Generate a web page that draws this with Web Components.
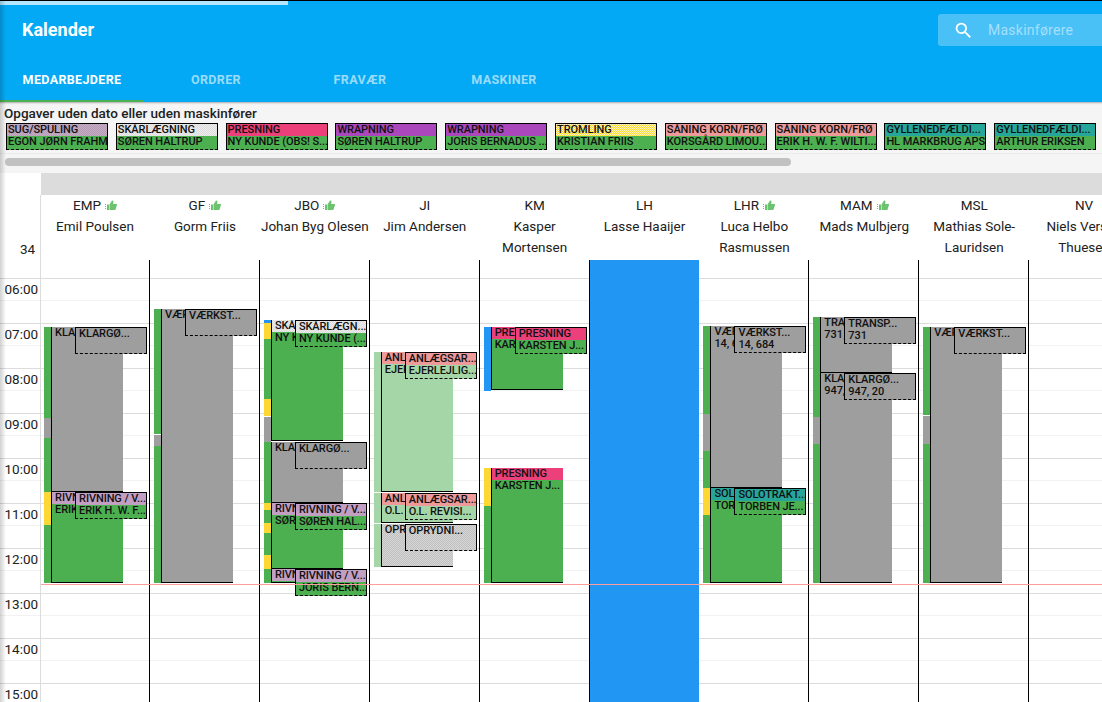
<!DOCTYPE html>
<html lang="da">
<head>
<meta charset="utf-8">
<title>Kalender</title>
<style>
html, body { margin: 0; height: 100%; overflow: hidden; background: #fff; font-family: Roboto, "Liberation Sans", sans-serif; }
</style>
</head>
<body>
<kal-app>
    <kal-header slot="header" title="Kalender" search="Maskinførere">
        <kal-tab active>MEDARBEJDERE</kal-tab>
        <kal-tab>ORDRER</kal-tab>
        <kal-tab>FRAVÆR</kal-tab>
        <kal-tab>MASKINER</kal-tab>
    </kal-header>
    <task-strip slot="strip" heading="Opgaver uden dato eller uden maskinfører">
        <task-chip kind="sug" top="SUG/SPULING" bottom="EGON JØRN FRAHM"></task-chip>
        <task-chip kind="skaer" top="SKÅRLÆGNING" bottom="SØREN HALTRUP"></task-chip>
        <task-chip kind="pres" top="PRESNING" bottom="NY KUNDE (OBS! S..."></task-chip>
        <task-chip kind="wrap" top="WRAPNING" bottom="SØREN HALTRUP"></task-chip>
        <task-chip kind="wrap" top="WRAPNING" bottom="JORIS BERNADUS ..."></task-chip>
        <task-chip kind="trom" top="TROMLING" bottom="KRISTIAN FRIIS"></task-chip>
        <task-chip kind="saa" top="SÅNING KORN/FRØ" bottom="KORSGÅRD LIMOU..."></task-chip>
        <task-chip kind="saa" top="SÅNING KORN/FRØ" bottom="ERIK H. W. F. WILTI..."></task-chip>
        <task-chip kind="gyl" top="GYLLENEDFÆLDI..." bottom="HL MARKBRUG APS"></task-chip>
        <task-chip kind="gyl" top="GYLLENEDFÆLDI..." bottom="ARTHUR ERIKSEN"></task-chip>
    </task-strip>
    <cal-board slot="board"></cal-board>
</kal-app>

<script>
// shared colours for the task kinds
const kinds = {
    sug: 'repeating-conic-gradient(#b79ab5 0 25%, #c4aec3 0 50%) 0 0/2px 2px',
    skaer: 'repeating-conic-gradient(#dcdcdc 0 25%, #ececec 0 50%) 0 0/2px 2px',
    pres: '#ec407a',
    wrap: '#ab47bc',
    trom: 'repeating-conic-gradient(#fdd835 0 25%, #fff6c4 0 50%) 0 0/2px 2px',
    saa: '#ef9a9a',
    gyl: '#26a69a',
    riv: '#c39fc3',
    sol: '#26a69a',
    green: '#4caf50',
    lgreen: '#a5d6a7',
    grey: '#9e9e9e',
    opr: 'repeating-conic-gradient(#c0c0c0 0 25%, #d6d6d6 0 50%) 0 0/2px 2px',
    yellow: '#fdd835',
    blue: '#2196f3',
    white: '#fff'
}

class KalApp extends HTMLElement {
    constructor() {
        super()
        this.attachShadow({ mode: 'open' })
        this.shadowRoot.innerHTML = `
<style>
:host { display: flex; flex-direction: column; height: 702px; width: 1102px; overflow: hidden; position: relative; font-family: Roboto, "Liberation Sans", sans-serif; }
.edge { position: absolute; left: 0; top: 1px; bottom: 0; width: 6px; pointer-events: none;
    background: linear-gradient(to right, rgba(0,0,0,.18), rgba(0,0,0,0)); }
</style>
<slot name="header"></slot>
<slot name="strip"></slot>
<slot name="board"></slot>
<div class="edge"></div>`
    }
}
customElements.define('kal-app', KalApp)

class KalTab extends HTMLElement {
    constructor() {
        super()
        this.attachShadow({ mode: 'open' })
        this.shadowRoot.innerHTML = `
<style>
:host { display: flex; align-items: center; justify-content: center; width: 144px; height: 48px; padding-top: 5px; font-size: 12.5px; font-weight: 700; letter-spacing: .35px; color: rgba(255,255,255,.6); box-sizing: border-box; border-bottom: 2px solid transparent; }
:host([active]) { color: #fff; border-bottom-color: #4caf50; }
</style>
<slot></slot>`
    }
}
customElements.define('kal-tab', KalTab)

class KalHeader extends HTMLElement {
    constructor() {
        super()
        this.attachShadow({ mode: 'open' })
        this.shadowRoot.innerHTML = `
<style>
:host { display: block; flex: none; position: relative; height: 102px; box-sizing: border-box; border-top: 1px solid #000; background: #03a9f4; color: #fff; }
.progress { position: absolute; left: 0; top: 0; width: 288px; height: 4px; background: #b3e5fc; }
.bar { display: flex; align-items: center; justify-content: space-between; height: 56px; padding-left: 22px; }
h1 { margin: 0; font-size: 18px; font-weight: 700; }
.search { display: flex; align-items: center; gap: 14px; width: 164px; height: 32px; box-sizing: border-box; padding-left: 15px; background: rgba(255,255,255,.28); border-radius: 3px 0 0 3px; margin-top: 2px; font-size: 14px; color: rgba(255,255,255,.5); letter-spacing: .25px; }
svg { width: 21px; height: 21px; flex: none; fill: #fff; }
.tabs { display: flex; height: 45px; align-items: flex-end; }
</style>
<div class="progress"></div>
<div class="bar">
    <h1></h1>
    <div class="search">
        <svg viewBox="0 0 24 24"><path d="M15.5 14h-.79l-.28-.27A6.47 6.47 0 0 0 16 9.5 6.5 6.5 0 1 0 9.5 16c1.61 0 3.09-.59 4.23-1.57l.27.28v.79l5 4.99L20.49 19l-4.99-5zm-6 0C7.01 14 5 11.99 5 9.5S7.01 5 9.5 5 14 7.01 14 9.5 11.99 14 9.5 14z"/></svg>
        <span class="ph"></span>
    </div>
</div>
<div class="tabs"><slot></slot></div>`
        this.shadowRoot.querySelector('h1').textContent = this.getAttribute('title')
        this.shadowRoot.querySelector('.ph').textContent = this.getAttribute('search')
    }
}
customElements.define('kal-header', KalHeader)

class TaskStrip extends HTMLElement {
    constructor() {
        super()
        this.attachShadow({ mode: 'open' })
        this.shadowRoot.innerHTML = `
<style>
:host { display: block; flex: none; height: 71px; box-sizing: border-box; padding-top: 3px; background: #f5f5f5; box-shadow: inset 0 3px 2px -2px rgba(0,0,0,.3); overflow: hidden; position: relative; }
.title { font-size: 13.5px; font-weight: 500; line-height: 16px; height: 18px; padding-left: 4px; color: #212121; white-space: nowrap; }
.list { display: flex; gap: 7.8px; padding-left: 6px; height: 30px; border-bottom: 1px solid #ebebeb; }
.track { height: 8px; margin-top: 4px; margin-left: 5px; width: 786px; background: #c1c1c1; border-radius: 4px; }
</style>
<div class="title"></div>
<div class="list"><slot></slot></div>
<div class="track"></div>`
        this.shadowRoot.querySelector('.title').textContent = this.getAttribute('heading')
    }
}
customElements.define('task-strip', TaskStrip)

class TaskChip extends HTMLElement {
    constructor() {
        super()
        this.attachShadow({ mode: 'open' })
        this.shadowRoot.innerHTML = `
<style>
:host { display: block; flex: none; width: 102px; height: 27px; box-sizing: border-box; border: 1px solid #000; border-bottom-style: dashed; background: #4caf50; font-size: 11px; font-weight: 500; letter-spacing: -.06px; line-height: 12px; color: #111; overflow: hidden; white-space: nowrap; }
div { padding-left: 1px; }
.top { background: var(--top, #4caf50); height: 12px; }
.bottom { height: 13px; }
</style>
<div class="top"></div>
<div class="bottom"></div>`
        this.shadowRoot.querySelector('.top').textContent = this.getAttribute('top')
        this.shadowRoot.querySelector('.bottom').textContent = this.getAttribute('bottom')
        this.style.setProperty('--top', kinds[this.getAttribute('kind')])
    }
}
customElements.define('task-chip', TaskChip)

// a task inside a column: position on the time grid is the content here
class CalEvent extends HTMLElement {
    constructor() {
        super()
        this.attachShadow({ mode: 'open' })
        this.shadowRoot.innerHTML = `
<style>
:host { position: absolute; display: block; box-sizing: border-box; font-size: 11px; font-weight: 500; letter-spacing: -.1px; line-height: 12px; color: #111; overflow: hidden; white-space: nowrap; background: var(--bg); }
:host([variant="block"]) { left: 11px; width: 72px; border-left: 1px solid #000; border-bottom: 1px solid #000; }
:host([variant="over"]) { left: 35px; width: 72px; z-index: 2; border: 1px solid #000; border-bottom-style: dashed; }
.top { background: var(--head); height: 12px; padding-left: 3px; }
.bottom { height: 13px; padding-left: 3px; }
</style>
<div class="top"></div>
<div class="bottom"></div>`
    }
    connectedCallback() {
        this.shadowRoot.querySelector('.top').textContent = this.getAttribute('top') || ''
        this.shadowRoot.querySelector('.bottom').textContent = this.getAttribute('bottom') || ''
    }
}
customElements.define('cal-event', CalEvent)

class CalColumn extends HTMLElement {
    constructor() {
        super()
        this.attachShadow({ mode: 'open' })
        this.shadowRoot.innerHTML = `
<style>
:host { display: flex; flex-direction: column; flex: none; width: 109.9px; }
.head { height: 65px; box-sizing: border-box; padding-top: 0; text-align: center; font-size: 13.5px; line-height: 21px; color: #212121; }
.abbr { height: 21px; display: flex; justify-content: center; align-items: center; gap: 4px; }
.abbr svg { width: 12px; height: 11px; fill: #6cc36f; }
.body { position: relative; flex: 1; border-right: 1px solid #000; }
.off { position: absolute; left: 0; right: -1px; top: 0; bottom: 0; background: #2196f3; }
.strip { position: absolute; left: 4px; width: 7px; }
</style>
<div class="head">
    <div class="abbr"><span class="code"></span></div>
    <div class="name"></div>
</div>
<div class="body"></div>`
    }
    set data(c) {
        const root = this.shadowRoot
        root.querySelector('.code').textContent = c.code
        root.querySelector('.name').textContent = c.name
        if (c.thumb) {
            root.querySelector('.abbr').insertAdjacentHTML('beforeend',
                '<svg viewBox="0 0 24 22"><path d="M0 8h2v2H0zM0 12h2v2H0zM0 16h2v2H0zM4 9h4v11H4zM9 9l5-8c2 0 3 1 3 3l-1 4h7c1 0 1 1 1 2l-3 9c0 1-1 1-2 1H9z"/></svg>')
        }
        const body = root.querySelector('.body')
        if (c.off) {
            body.insertAdjacentHTML('beforeend', '<div class="off"></div>')
            return
        }
        // y values below come in page pixels, the body starts at y=260
        const top = 260
        for (const [from, to, kind] of c.strip || []) {
            const s = document.createElement('div')
            s.className = 'strip'
            s.style.top = from - top + 'px'
            s.style.height = to - from + 'px'
            s.style.background = kinds[kind]
            body.appendChild(s)
        }
        for (const e of c.blocks || []) {
            body.appendChild(this.makeEvent('block', e.from, e.to, e))
            if (e.over) body.appendChild(this.makeEvent('over', e.from, e.from + 27, { ...e, top: e.over[0], bottom: e.over[1] }))
        }
    }
    makeEvent(variant, from, to, e) {
        const el = document.createElement('cal-event')
        el.setAttribute('variant', variant)
        el.setAttribute('top', e.top)
        el.setAttribute('bottom', e.bottom || '')
        el.style.top = from - 260 + 'px'
        el.style.height = to - from + 'px'
        el.style.setProperty('--bg', kinds[e.bg])
        el.style.setProperty('--head', kinds[e.head || e.bg])
        return el
    }
}
customElements.define('cal-column', CalColumn)

const columns = [
    { code: 'EMP', name: 'Emil Poulsen', thumb: true,
      strip: [[327, 418, 'green'], [418, 438, 'grey'], [438, 492, 'green'], [492, 525, 'yellow'], [525, 583, 'green']],
      blocks: [
        { from: 327, to: 492, bg: 'grey', top: 'KLA', over: ['KLARGØ...', ''] },
        { from: 492, to: 583, bg: 'green', head: 'riv', top: 'RIVN', bottom: 'ERIK', over: ['RIVNING / V...', 'ERIK H. W. F...'] }
      ] },
    { code: 'GF', name: 'Gorm Friis', thumb: true,
      strip: [[309, 434, 'green'], [435, 446, 'grey'], [446, 583, 'green']],
      blocks: [{ from: 309, to: 583, bg: 'grey', top: 'VÆR', over: ['VÆRKST...', ''] }] },
    { code: 'JBO', name: 'Johan Byg Olesen', thumb: true,
      strip: [[320, 323, 'blue'], [323, 339, 'yellow'], [339, 399, 'green'], [399, 416, 'yellow'], [417, 442, 'grey'], [442, 503, 'green'], [503, 510, 'yellow'], [510, 523, 'green'], [523, 533, 'yellow'], [533, 555, 'green'], [555, 569, 'yellow'], [569, 583, 'green']],
      blocks: [
        { from: 320, to: 441, bg: 'green', head: 'skaer', top: 'SKÅ', bottom: 'NY K', over: ['SKÅRLÆGN...', 'NY KUNDE (...'] },
        { from: 442, to: 503, bg: 'grey', top: 'KLA', over: ['KLARGØ...', ''] },
        { from: 503, to: 569, bg: 'green', head: 'riv', top: 'RIVN', bottom: 'SØR', over: ['RIVNING / V...', 'SØREN HAL...'] },
        { from: 569, to: 583, bg: 'green', head: 'riv', top: 'RIVN', over: ['RIVNING / V...', 'JORIS BERN...'] }
      ] },
    { code: 'JI', name: 'Jim Andersen',
      strip: [[352, 492, 'lgreen'], [493, 523, 'lgreen'], [524, 567, 'lgreen']],
      blocks: [
        { from: 352, to: 492, bg: 'lgreen', head: 'saa', top: 'ANL', bottom: 'EJEI', over: ['ANLÆGSAR...', 'EJERLEJLIG...'] },
        { from: 493, to: 523, bg: 'lgreen', head: 'saa', top: 'ANL', bottom: 'O.L.', over: ['ANLÆGSAR...', 'O.L. REVISI...'] },
        { from: 524, to: 567, bg: 'opr', top: 'OPR', over: ['OPRYDNI...', ''] }
      ] },
    { code: 'KM', name: 'Kasper Mortensen',
      strip: [[327, 391, 'blue'], [468, 506, 'yellow'], [506, 583, 'green']],
      blocks: [
        { from: 327, to: 390, bg: 'green', head: 'pres', top: 'PRE', bottom: 'KAR', over: ['PRESNING', 'KARSTEN J...'] },
        { from: 468, to: 583, bg: 'green', head: 'pres', top: 'PRESNING', bottom: 'KARSTEN J...' }
      ] },
    { code: 'LH', name: 'Lasse Haaijer', off: true },
    { code: 'LHR', name: 'Luca Helbo Rasmussen', thumb: true,
      strip: [[326, 414, 'green'], [414, 451, 'grey'], [451, 488, 'green'], [488, 515, 'yellow'], [515, 583, 'green']],
      blocks: [
        { from: 326, to: 488, bg: 'grey', top: 'VÆR', bottom: '14, 6', over: ['VÆRKST...', '14, 684'] },
        { from: 488, to: 583, bg: 'green', head: 'sol', top: 'SOL', bottom: 'TOR', over: ['SOLOTRAKT...', 'TORBEN JE...'] }
      ] },
    { code: 'MAM', name: 'Mads Mulbjerg', thumb: true,
      strip: [[317, 417, 'green'], [417, 444, 'grey'], [444, 583, 'green']],
      blocks: [
        { from: 317, to: 373, bg: 'grey', top: 'TRA', bottom: '731', over: ['TRANSP...', '731'] },
        { from: 373, to: 583, bg: 'grey', top: 'KLA', bottom: '947,', over: ['KLARGØ...', '947, 20'] }
      ] },
    { code: 'MSL', name: 'Mathias Sole-Lauridsen',
      strip: [[327, 415, 'green'], [416, 444, 'grey'], [444, 583, 'green']],
      blocks: [{ from: 327, to: 583, bg: 'grey', top: 'VÆR', over: ['VÆRKST...', ''] }] },
    { code: 'NV', name: 'Niels Versen Thuesen' }
]

class CalBoard extends HTMLElement {
    constructor() {
        super()
        this.attachShadow({ mode: 'open' })
        this.shadowRoot.innerHTML = `
<style>
:host { display: block; flex: 1; min-height: 0; overflow: hidden; background: #fff; }
.band { height: 22px; margin-left: 41px; background: #dcdcdc; }
.main { display: flex; height: 507px; position: relative;
    background: linear-gradient(#dcdcdc 1px, transparent 1px, transparent 22px, #f2f2f2 22px, #f2f2f2 23px, transparent 23px) 0 83px/100% 45px; }
.main::before { content: ''; position: absolute; left: 0; top: 0; right: 0; height: 83px; background: #fff; }
.hours { flex: none; width: 40.1px; position: relative; box-sizing: content-box; border-right: 1px solid #dcdcdc; margin-right: -1px; font-size: 13.5px; color: #212121; }
.hours div { height: 45px; text-align: right; padding-right: 2px; line-height: 22px; }
.hours .week { height: 83px; box-sizing: border-box; padding: 43px 5px 0 0; text-align: right; line-height: 22px; }
.cols { display: flex; position: relative; }
.now { position: absolute; left: 41px; right: 0; top: 389px; height: 1px; background: #ff9c9c; z-index: 3; }
</style>
<div class="band"></div>
<div class="main">
    <div class="hours"><div class="week">34</div></div>
    <div class="cols"></div>
    <div class="now"></div>
</div>`
        const hours = this.shadowRoot.querySelector('.hours')
        for (let h = 6; h <= 15; h++) {
            const d = document.createElement('div')
            d.textContent = String(h).padStart(2, '0') + ':00'
            hours.appendChild(d)
        }
        const cols = this.shadowRoot.querySelector('.cols')
        for (const c of columns) {
            const col = document.createElement('cal-column')
            cols.appendChild(col)
            col.data = c
        }
    }
}
customElements.define('cal-board', CalBoard)
</script>
</body>
</html>
